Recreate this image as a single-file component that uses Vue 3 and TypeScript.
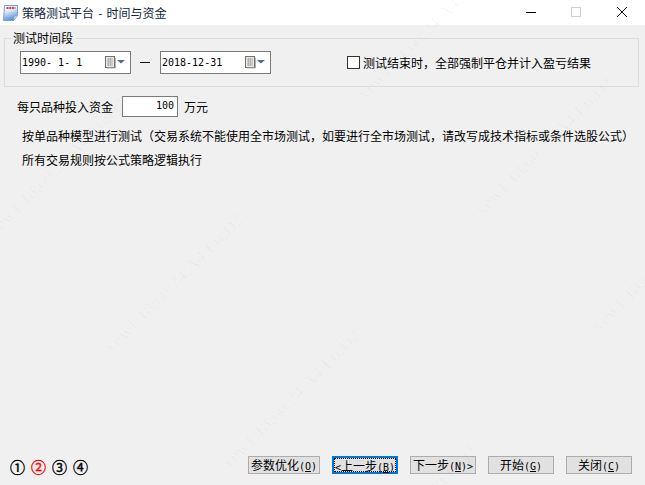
<script setup lang="ts">
const marks: { x: number; y: number }[] = [
  { x: 240, y: 217 }, { x: 493, y: -36 }, { x: 123, y: 101 },
  { x: 357, y: 333 }, { x: 610, y: 80 }, { x: 474, y: 449 }, { x: 727, y: 196 }
]
function markStyle(m: { x: number; y: number }) {
  return { left: m.x - 240 + 'px', top: m.y - 10 + 'px' }
}
</script>

<template>
  <div class="window">
    <header class="titlebar">
      <svg class="app-icon" width="18" height="18" viewBox="0 0 18 18">
        <defs>
          <linearGradient id="page" x1="0" y1="0" x2="0.3" y2="1">
            <stop offset="0" stop-color="#ffffff" />
            <stop offset="0.45" stop-color="#dbe8f8" />
            <stop offset="1" stop-color="#5f93d6" />
          </linearGradient>
        </defs>
        <path d="M2.5 1.5h13v10l-4 5h-10z" fill="url(#page)" stroke="#7e9fc9" />
        <path d="M11.5 16.5l.8-4 3.2-1z" fill="#e6eefa" stroke="#7e9fc9" stroke-width=".6" />
        <path d="M4.5 4h9" stroke="#d8404a" stroke-width="2" stroke-dasharray="2 .7" />
      </svg>
      <span class="title">策略测试平台 - 时间与资金</span>
      <div class="controls">
        <svg width="130" height="25" viewBox="0 0 130 25">
          <path d="M11 12.5h10" stroke="#000" stroke-width="1" />
          <rect x="56.5" y="7.5" width="9" height="9" fill="none" stroke="#cfcfcf" />
          <path d="M102 7l10 10M112 7l-10 10" stroke="#111" stroke-width="1" />
        </svg>
      </div>
    </header>

    <main class="body">
      <fieldset class="group">
        <legend>测试时间段</legend>
        <div class="date-row">
          <div class="date">
            <span class="lat">1990- 1- 1</span>
            <span class="picker">
              <svg width="20" height="13" viewBox="0 0 20 13">
                <rect x="0.5" y="0.5" width="9" height="11" fill="#e6e6e6" stroke="#77706a" />
                <path d="M2 3h6M2 5h6M2 7h6M2 9h6M3.5 2v8M5.5 2v8" stroke="#a8a8a8" stroke-width=".8" />
                <path d="M10.5 2v10H2" fill="none" stroke="#b5aea6" />
                <path d="M12 4h8l-4 3.5z" fill="#56688c" />
              </svg>
            </span>
          </div>
          <span class="dash"></span>
          <div class="date">
            <span class="lat">2018-12-31</span>
            <span class="picker">
              <svg width="20" height="13" viewBox="0 0 20 13">
                <rect x="0.5" y="0.5" width="9" height="11" fill="#e6e6e6" stroke="#77706a" />
                <path d="M2 3h6M2 5h6M2 7h6M2 9h6M3.5 2v8M5.5 2v8" stroke="#a8a8a8" stroke-width=".8" />
                <path d="M10.5 2v10H2" fill="none" stroke="#b5aea6" />
                <path d="M12 4h8l-4 3.5z" fill="#56688c" />
              </svg>
            </span>
          </div>
          <label class="check">
            <span class="box"></span>
            <span>测试结束时，全部强制平仓并计入盈亏结果</span>
          </label>
        </div>
      </fieldset>

      <div class="fund-row">
        <span>每只品种投入资金</span>
        <span class="amount lat">100</span>
        <span>万元</span>
      </div>

      <p class="note first">按单品种模型进行测试（交易系统不能使用全市场测试，如要进行全市场测试，请改写成技术指标或条件选股公式）</p>
      <p class="note">所有交易规则按公式策略逻辑执行</p>

      <footer class="footer">
        <div class="steps">
          <span>①</span>
          <span class="current">②</span>
          <span>③</span>
          <span>④</span>
        </div>
        <div class="buttons">
          <button class="btn wide">参数优化<span class="lat">(<u>O</u>)</span></button>
          <button class="btn focus"><span class="inner"><span class="lat">&lt;</span>上一步<span class="lat">(<u>B</u>)</span></span></button>
          <button class="btn">下一步<span class="lat">(<u>N</u>)&gt;</span></button>
          <button class="btn">开始<span class="lat">(<u>G</u>)</span></button>
          <button class="btn">关闭<span class="lat">(<u>C</u>)</span></button>
        </div>
      </footer>
    </main>

    <div class="watermarks">
      <span v-for="(m, i) in marks" :key="i" class="mark" :style="markStyle(m)">yew1 18:60:24:A4:E6:D2</span>
    </div>
  </div>
</template>

<style scoped>
.window {
  position: relative;
  width: 645px;
  height: 485px;
  overflow: hidden;
  display: flex;
  flex-direction: column;
  background: #f0f0f0;
  font-family: "Noto Sans CJK SC", "Liberation Sans", sans-serif;
  font-size: 12px;
  line-height: 14px;
  color: #000;
}
.lat {
  font-family: "DejaVu Sans Mono", monospace;
  font-size: 10px;
}
.titlebar {
  height: 25px;
  flex: none;
  display: flex;
  align-items: center;
  background: #fff;
  padding-left: 2px;
}
.app-icon {
  flex: none;
  margin-right: 2px;
}
.title {
  color: #10243c;
  font-size: 12px;
  word-spacing: 1.5px;
}
.controls {
  margin-left: auto;
  height: 25px;
  width: 130px;
}
.controls svg {
  display: block;
}
.body {
  flex: 1;
  min-height: 0;
  display: flex;
  flex-direction: column;
}
.group {
  margin: 6px 6px 0 4px;
  padding: 0 0 0 15px;
  height: 56px;
  box-sizing: border-box;
  border: 1px solid #dcdcdc;
  min-width: 0;
}
.group legend {
  padding: 0 3px 0 2px;
  margin-left: -9px;
  line-height: 14px;
}
.date-row {
  display: flex;
  align-items: center;
  margin-top: 6px;
}
.date {
  width: 111px;
  height: 23px;
  box-sizing: border-box;
  border: 1px solid #7a7a7a;
  background: #fff;
  display: flex;
  align-items: center;
  padding-left: 1px;
}
.date .lat {
  white-space: pre;
}
.picker {
  margin-left: auto;
  margin-right: 5px;
  height: 13px;
}
.picker svg {
  display: block;
}
.dash {
  width: 10px;
  height: 1px;
  background: #111;
  margin: 0 10px 0 9px;
}
.check {
  display: flex;
  align-items: center;
  margin-left: 76px;
  white-space: nowrap;
}
.box {
  width: 13px;
  height: 13px;
  box-sizing: border-box;
  border: 1px solid #333;
  background: #fff;
  margin-right: 3px;
  flex: none;
}
.fund-row {
  display: flex;
  align-items: center;
  margin: 9px 0 0 17px;
  height: 21px;
  line-height: 19px;
}
.amount {
  width: 56px;
  height: 21px;
  box-sizing: border-box;
  border: 1px solid #7a7a7a;
  background: #fff;
  margin: 0 6px 0 9px;
  text-align: right;
  padding-right: 3px;
  line-height: 18px;
}
.note {
  margin: 10px 0 0 22px;
  white-space: nowrap;
  line-height: 14px;
}
.note.first {
  margin-top: 12px;
}
.footer {
  margin-top: auto;
  display: flex;
  align-items: center;
  justify-content: space-between;
  padding: 0 13px 10px 10px;
}
.steps {
  display: flex;
  gap: 6px;
  margin-top: 4px;
  font-size: 15px;
  line-height: 16px;
  -webkit-text-stroke: 0.4px currentColor;
}
.steps .current {
  color: #ff0000;
}
.buttons {
  display: flex;
  gap: 12px;
}
.btn {
  width: 66px;
  height: 18px;
  box-sizing: border-box;
  border: 1px solid #adadad;
  background: #e1e1e1;
  padding: 0;
  margin: 0;
  font: inherit;
  color: #000;
  white-space: nowrap;
  line-height: 15px;
}
.btn.wide {
  width: 72px;
}
.btn.focus {
  border: 2px solid #0078d7;
  padding: 0;
}
.inner {
  display: block;
  height: 14px;
  line-height: 13px;
  border: 1px dotted #000;
  box-sizing: border-box;
}
.watermarks {
  position: absolute;
  inset: 0;
  pointer-events: none;
  overflow: hidden;
}
.mark {
  position: absolute;
  width: 240px;
  text-align: right;
  white-space: nowrap;
  font-family: "Liberation Serif", serif;
  font-size: 18px;
  line-height: 20px;
  color: rgba(0, 0, 0, 0.03);
  transform: rotate(-45deg);
  transform-origin: 100% 50%;
}
</style>
